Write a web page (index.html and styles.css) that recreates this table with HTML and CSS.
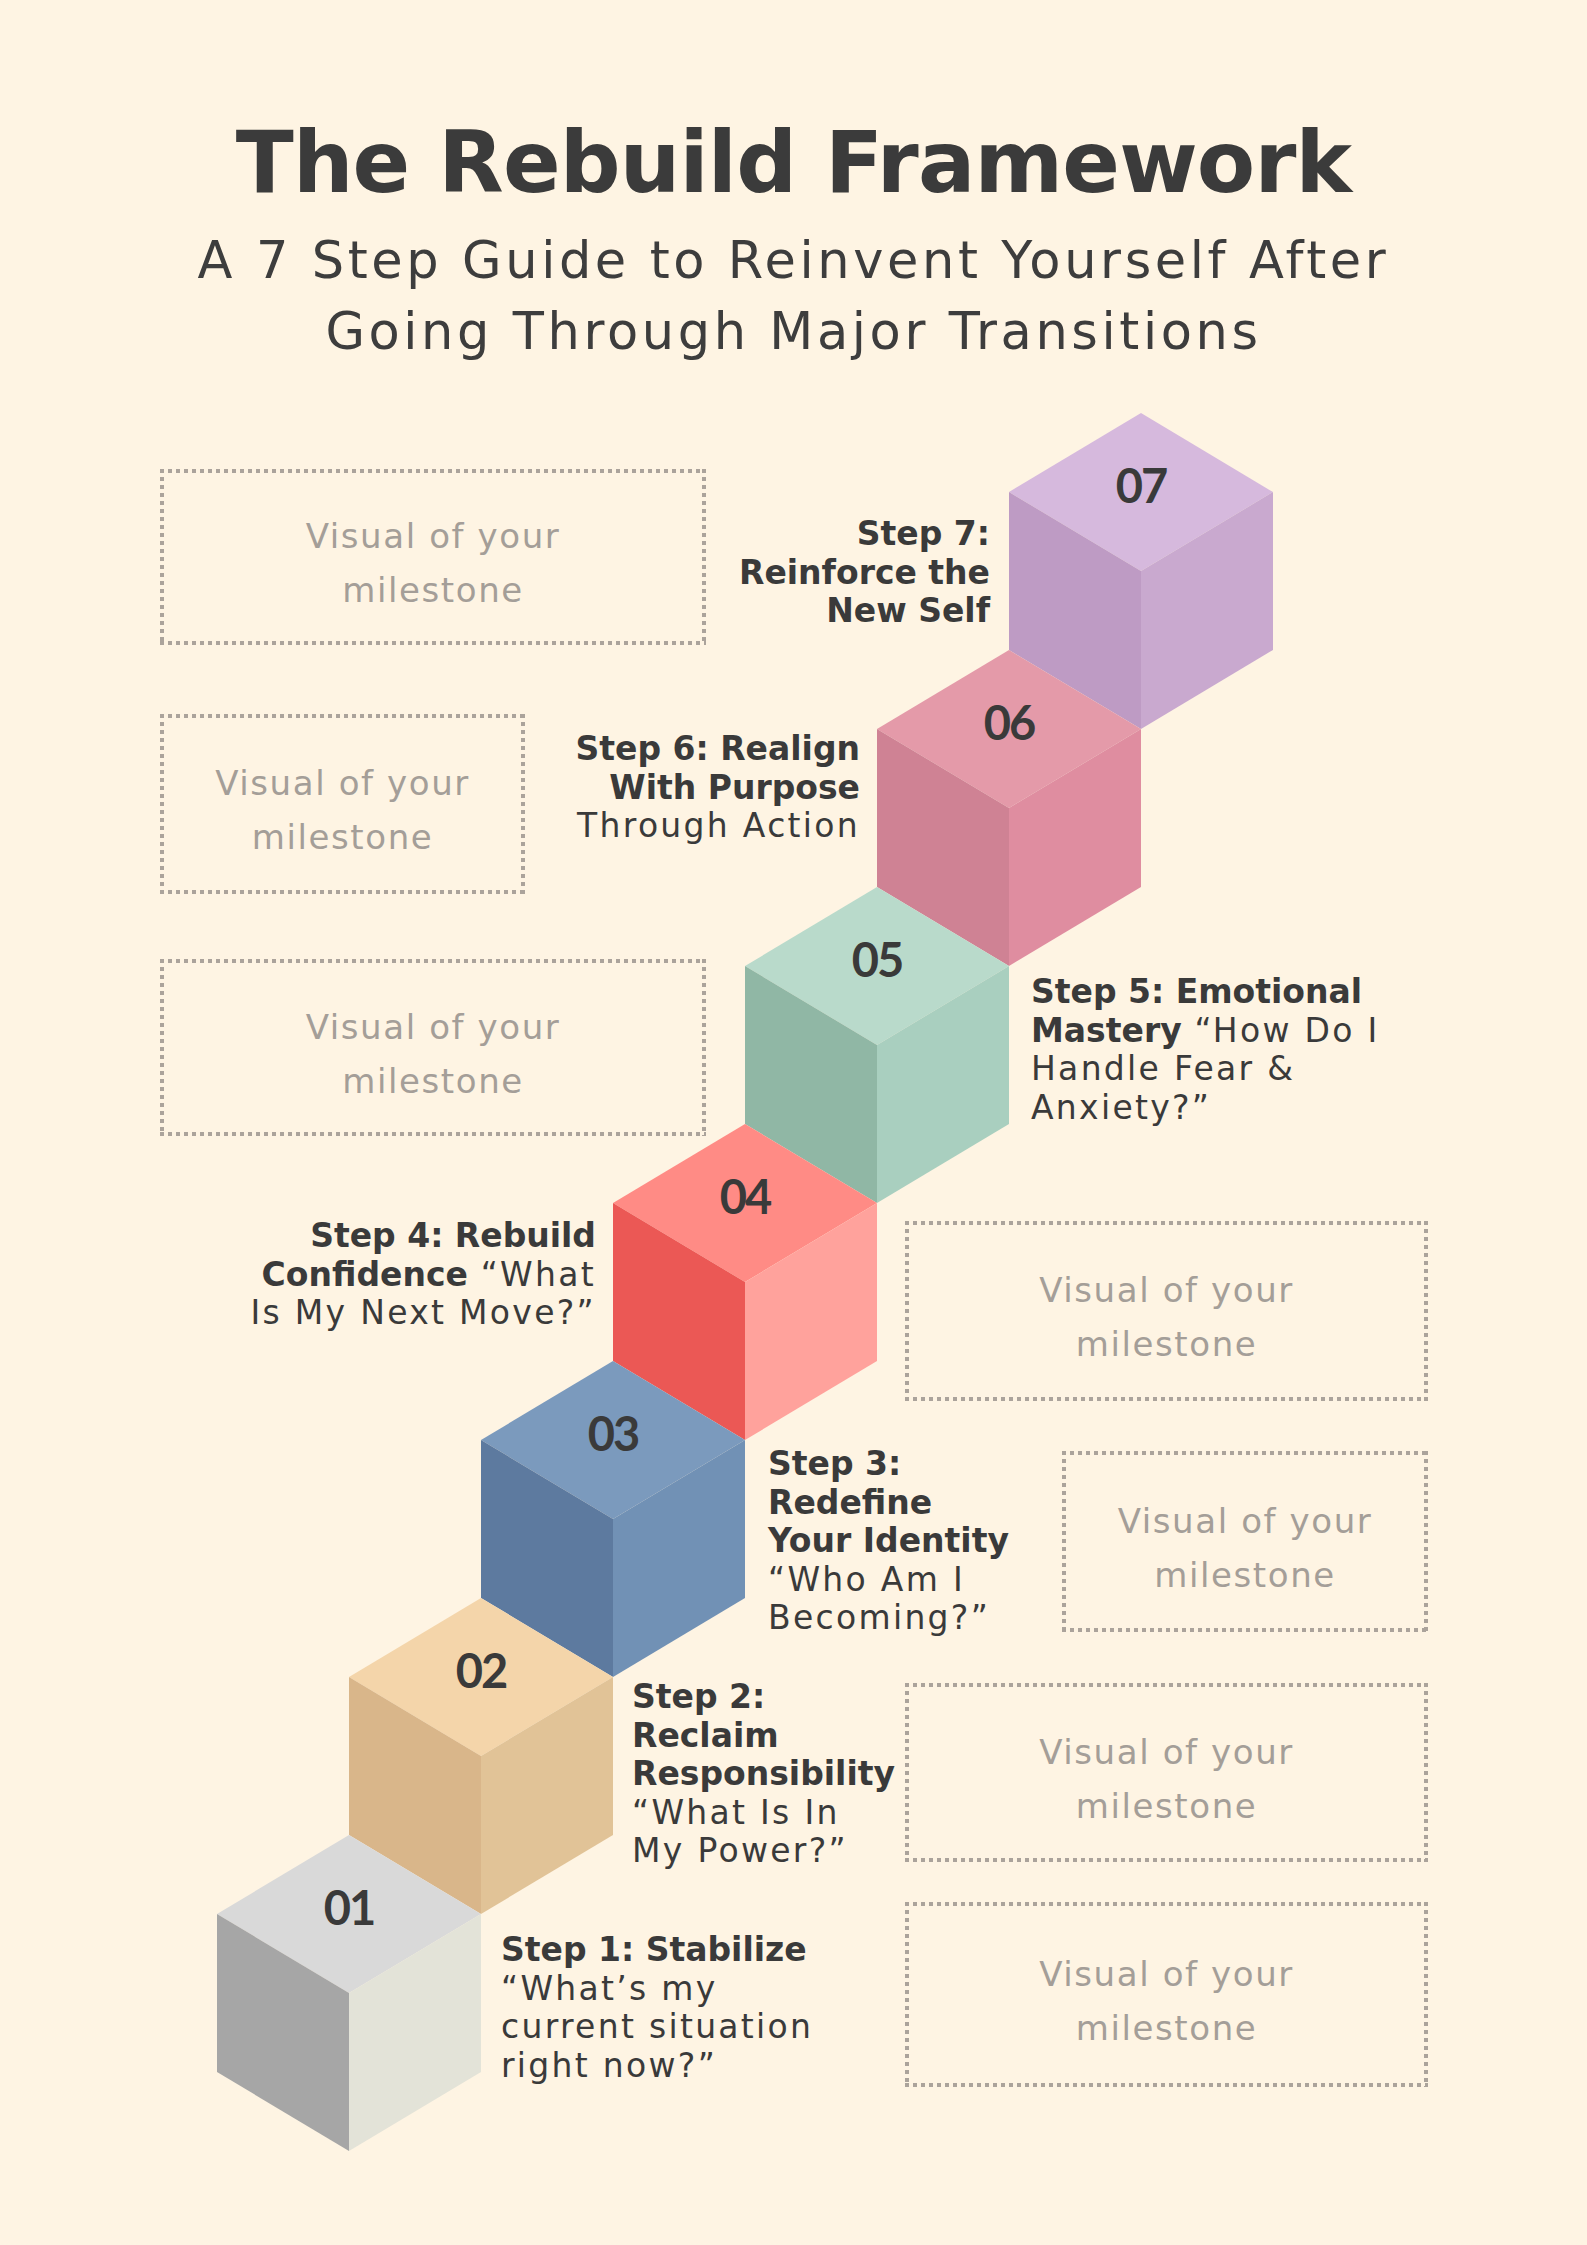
FILE: index.html
```html
<!DOCTYPE html>
<html lang="en">
<head>
<meta charset="utf-8">
<title>The Rebuild Framework</title>
<link rel="stylesheet" href="styles.css">
</head>
<body>
<main class="page">
  <header class="header">
    <h1 class="title">The Rebuild Framework</h1>
    <p class="subtitle">A 7 Step Guide to Reinvent Yourself After<br>Going Through Major Transitions</p>
  </header>

  <section class="stage">
    <svg class="stairs" width="1587" height="1845" viewBox="0 0 1587 1845" aria-hidden="true">
      <defs>
        <g id="cube">
          <polygon class="top" points="0,0 132,79 0,158 -132,79"/>
          <polygon class="left" points="-132,79 0,158 0,316 -132,237"/>
          <polygon class="right" points="132,79 0,158 0,316 132,237"/>
        </g>
      </defs>
      <g class="cube c7" transform="translate(1141,13)"><use href="#cube"/><text x="0" y="90">07</text></g>
      <g class="cube c6" transform="translate(1009,250)"><use href="#cube"/><text x="0" y="90">06</text></g>
      <g class="cube c5" transform="translate(877,487)"><use href="#cube"/><text x="0" y="90">05</text></g>
      <g class="cube c4" transform="translate(745,724)"><use href="#cube"/><text x="0" y="90">04</text></g>
      <g class="cube c3" transform="translate(613,961)"><use href="#cube"/><text x="0" y="90">03</text></g>
      <g class="cube c2" transform="translate(481,1198)"><use href="#cube"/><text x="0" y="90">02</text></g>
      <g class="cube c1" transform="translate(349,1435)"><use href="#cube"/><text x="0" y="90">01</text></g>
    </svg>

    <div class="box b7">Visual of your<br>milestone</div>
    <div class="box b6">Visual of your<br>milestone</div>
    <div class="box b5">Visual of your<br>milestone</div>
    <div class="box b4">Visual of your<br>milestone</div>
    <div class="box b3">Visual of your<br>milestone</div>
    <div class="box b2">Visual of your<br>milestone</div>
    <div class="box b1">Visual of your<br>milestone</div>

    <p class="label align-right l7"><b>Step 7:<br>Reinforce the<br>New Self</b></p>
    <p class="label align-right l6"><b>Step 6: Realign<br>With Purpose</b><br>Through Action</p>
    <p class="label l5"><b>Step 5: Emotional<br>Mastery</b> “How Do I<br>Handle Fear &amp;<br>Anxiety?”</p>
    <p class="label align-right l4"><b>Step 4: Rebuild<br>Confidence</b> “What<br>Is My Next Move?”</p>
    <p class="label l3"><b>Step 3:<br>Redefine<br>Your Identity</b><br>“Who Am I<br>Becoming?”</p>
    <p class="label l2"><b>Step 2:<br>Reclaim<br>Responsibility</b><br>“What Is In<br>My Power?”</p>
    <p class="label l1"><b>Step 1: Stabilize</b><br>“What’s my<br>current situation<br>right now?”</p>
  </section>
</main>
</body>
</html>
```

FILE: styles.css
```css
html, body {
  margin: 0;
  padding: 0;
  background: #fef4e3;
}

.page {
  width: 1587px;
  height: 2245px;
  overflow: hidden;
  background: #fef4e3;
  color: #3b3b3b;
  font-family: "DejaVu Sans", sans-serif;
}

.header {
  padding-top: 113px;
  text-align: center;
}

.title {
  margin: 0;
  font-size: 85px;
  line-height: 100px;
  font-weight: 700;
  letter-spacing: -0.8px;
  color: #3b3b3b;
}

.subtitle {
  margin: 12px 0 0;
  font-size: 51px;
  line-height: 71px;
  font-weight: 400;
  letter-spacing: 3.6px;
  color: #3d3d3d;
}

.stage {
  position: relative;
  width: 1587px;
  height: 1845px;
  margin-top: 33px;
}

.stairs {
  display: block;
}

.stairs .top { fill: var(--top); }
.stairs .left { fill: var(--left); }
.stairs .right { fill: var(--right); }

.cube text {
  font-family: "Lato", "DejaVu Sans", sans-serif;
  font-weight: 700;
  font-size: 47px;
  letter-spacing: -2px;
  text-anchor: middle;
  fill: #3a3a3a;
}

.c7 { --top: #d6b9dd; --left: #be9bc4; --right: #c9a9cf; }
.c6 { --top: #e49aa9; --left: #cf8294; --right: #df8da0; }
.c5 { --top: #b9dacb; --left: #90b7a5; --right: #a9cfbf; }
.c4 { --top: #ff8b85; --left: #eb5855; --right: #ffa29c; }
.c3 { --top: #7b9abd; --left: #5d7a9f; --right: #7191b5; }
.c2 { --top: #f4d5aa; --left: #d9b68a; --right: #e1c397; }
.c1 { --top: #d9d9d9; --left: #a6a6a6; --right: #e3e3d8; }

/* placeholder boxes */
.box {
  position: absolute;
  box-sizing: border-box;
  display: flex;
  align-items: center;
  justify-content: center;
  padding-top: 12px;
  text-align: center;
  font-size: 34px;
  line-height: 54px;
  letter-spacing: 1.6px;
  color: #a49e98;
  background-image:
    repeating-linear-gradient(90deg, #aba39b 0 4px, transparent 4px 8px),
    repeating-linear-gradient(90deg, #aba39b 0 4px, transparent 4px 8px),
    repeating-linear-gradient(180deg, #aba39b 0 4px, transparent 4px 8px),
    repeating-linear-gradient(180deg, #aba39b 0 4px, transparent 4px 8px);
  background-size: 100% 4px, 100% 4px, 4px 100%, 4px 100%;
  background-position: left top, left bottom, left top, right top;
  background-repeat: no-repeat;
}

.b7 { left: 160px; top: 69px; width: 546px; height: 176px; }
.b6 { left: 160px; top: 314px; width: 365px; height: 180px; }
.b5 { left: 160px; top: 559px; width: 546px; height: 177px; }
.b4 { left: 905px; top: 821px; width: 523px; height: 180px; }
.b3 { left: 1062px; top: 1051px; width: 366px; height: 181px; }
.b2 { left: 905px; top: 1283px; width: 523px; height: 179px; }
.b1 { left: 905px; top: 1502px; width: 523px; height: 185px; }

/* step labels */
.label {
  position: absolute;
  margin: 0;
  white-space: nowrap;
  font-size: 33px;
  line-height: 38.5px;
  letter-spacing: 2.3px;
  color: #3a3a3a;
}

.label b {
  font-weight: 700;
  letter-spacing: 0;
}

.align-right {
  text-align: right;
}

.l7 { right: 597px; top: 115px; }
.l6 { right: 727px; top: 330px; }
.l5 { left: 1031px; top: 573px; }
.l4 { right: 991px; top: 817px; }
.l3 { left: 768px; top: 1045px; }
.l2 { left: 632px; top: 1278px; }
.l1 { left: 501px; top: 1531px; }
```
